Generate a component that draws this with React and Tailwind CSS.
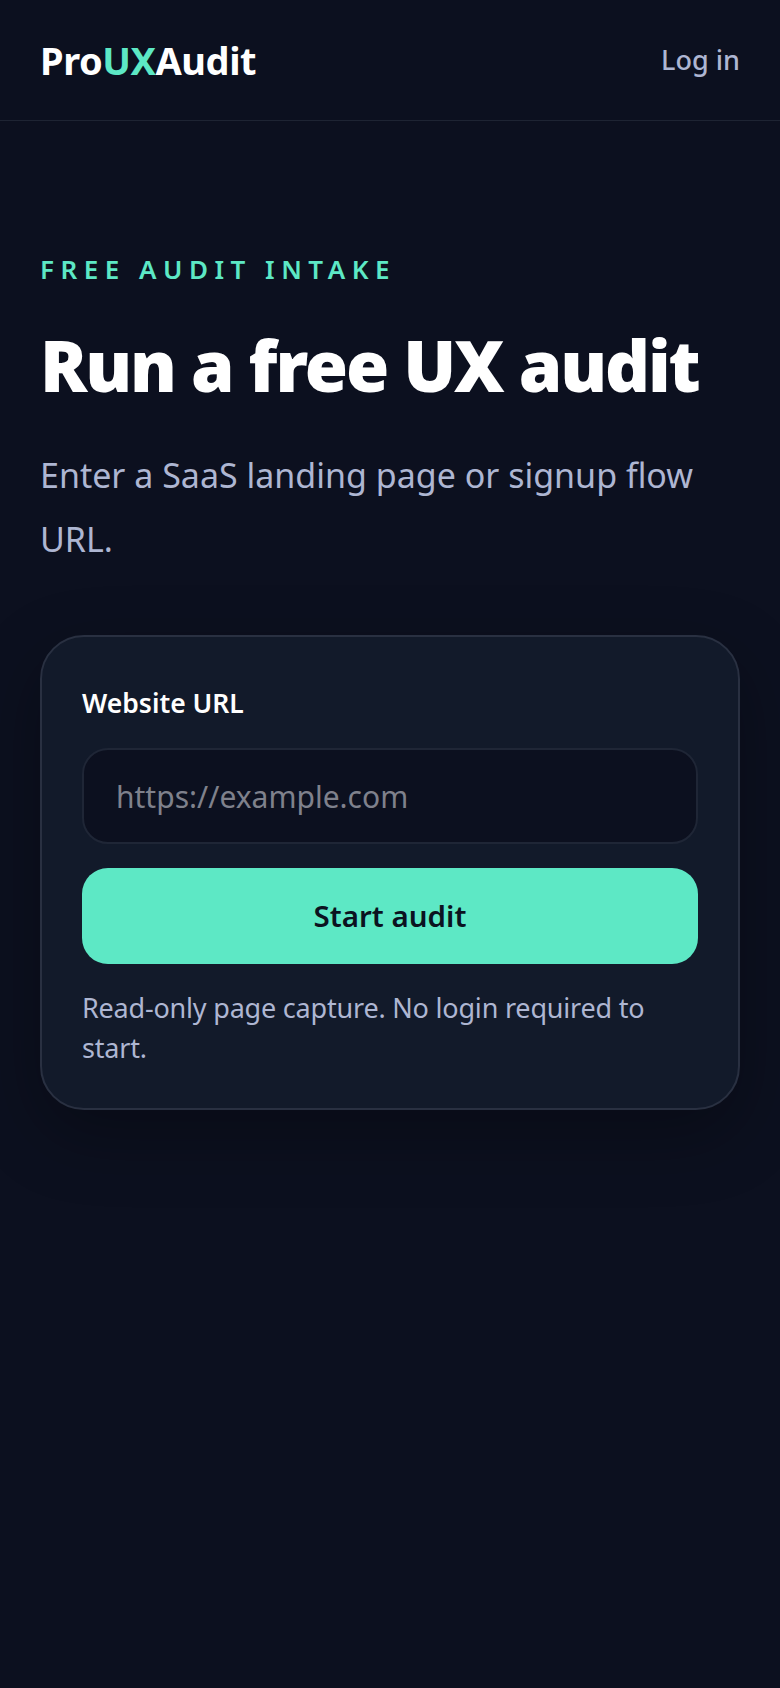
export default function App() {
  return (
    <div className="min-h-[1688px] bg-[#0c101f] font-['Noto_Sans',sans-serif] text-white">
      <header className="flex h-[121px] items-center justify-between border-b border-[#1e2433] px-[40px]">
        <div className="text-[38px] font-bold tracking-[-0.012em]">
          Pro<span className="text-[#5de8c5]">UX</span>Audit
        </div>
        <a className="text-[27px] font-medium text-[#aeb6d2]">Log in</a>
      </header>

      <main className="px-[40px] pt-[132px]">
        <p className="text-[26px] leading-[32px] font-semibold tracking-[0.25em] text-[#5de8c5]">FREE AUDIT INTAKE</p>
        <h1 className="mt-[35px] text-[70px] leading-[90px] font-black tracking-[-0.03em] text-white">Run a free UX audit</h1>
        <p className="mt-[33px] text-[34px] leading-[64px] text-[#aeb6d2]">Enter a SaaS landing page or signup flow URL.</p>

        <section className="mt-[64px] rounded-[44px] border-2 border-[#293041] bg-[#121a2a] px-[40px] pt-[48px] pb-[40px] shadow-[0_24px_70px_rgba(0,0,0,0.3)]">
          <label className="block text-[26.5px] leading-[36px] font-semibold text-white">Website URL</label>
          <input
            placeholder="https://example.com"
            className="mt-[27px] h-[96px] w-full rounded-[26px] border-2 border-[#1f2636] bg-[#0c101f] px-[32px] text-[30px] text-white outline-none placeholder:text-[#7f818c]"
          />
          <button className="mt-[24px] h-[96px] w-full rounded-[26px] bg-[#5de8c5] text-[29.5px] font-semibold text-[#0b1220]">
            Start audit
          </button>
          <p className="mt-[24px] text-[27px] leading-[40px] tracking-[-0.2px] text-[#aeb6d2]">Read-only page capture. No login required to start.</p>
        </section>
      </main>
    </div>
  );
}
